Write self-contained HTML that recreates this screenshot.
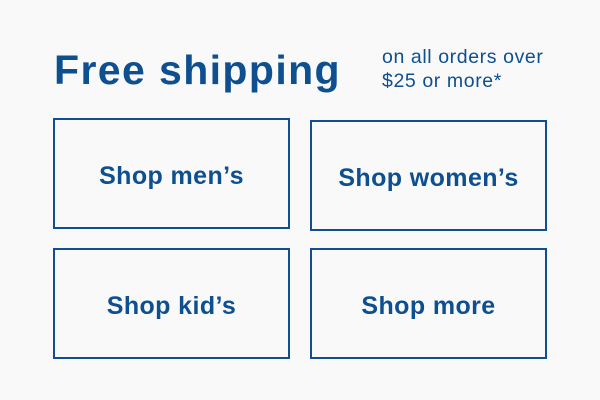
<!DOCTYPE html>
<html><head><style>
body{margin:0;width:600px;height:400px;background:#f9f9f9;font-family:"Liberation Sans",sans-serif;color:#0d4f8f;position:relative;overflow:hidden}
.t{position:absolute;left:54px;top:45px;font-size:41px;font-weight:bold;line-height:50px;letter-spacing:1.4px;white-space:nowrap}
.s{position:absolute;left:382px;top:45px;font-size:19.5px;line-height:24px;letter-spacing:0.6px;white-space:nowrap}
.b{position:absolute;width:233px;height:107px;border:2px solid #0d4f8f;display:flex;align-items:center;justify-content:center;font-size:25px;font-weight:bold;letter-spacing:0.4px;box-sizing:content-box}
.b span{position:relative;top:3px}
</style></head><body>
<div class="t">Free shipping</div>
<div class="s">on all orders over<br>$25 or more*</div>
<div class="b" style="left:53px;top:118px"><span>Shop men’s</span></div>
<div class="b" style="left:310px;top:120px"><span>Shop women’s</span></div>
<div class="b" style="left:53px;top:248px"><span>Shop kid’s</span></div>
<div class="b" style="left:310px;top:248px"><span>Shop more</span></div>
</body></html>
